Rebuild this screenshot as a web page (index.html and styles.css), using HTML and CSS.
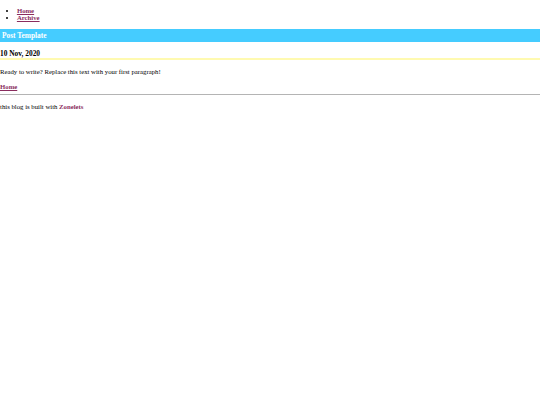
FILE: index.html
```html
<!DOCTYPE html>
<html lang="en">
<head>
<meta charset="utf-8">
<title>Post Template</title>
<link rel="stylesheet" href="styles.css">
</head>
<body>
<div class="header">
  <ul class="nav">
    <li><a href="#">Home</a></li>
    <li><a href="#">Archive</a></li>
  </ul>
</div>
<div class="content">
  <h1 class="post-title">Post Template</h1>
  <h2 class="post-date">10 Nov, 2020</h2>
  <p class="text">Ready to write? Replace this text with your first paragraph!</p>
  <p class="back"><a href="#">Home</a></p>
</div>
<div class="footer">
  <hr class="rule">
  <p class="credit">this blog is built with <a href="#">Zonelets</a></p>
</div>
</body>
</html>
```
FILE: styles.css
```css
html {
  background: #ffffff;
}
body {
  margin: 0;
  font-family: "Liberation Serif", "Times New Roman", serif;
  font-size: 6.75px;
  color: #000000;
}
a {
  color: #8a2d5e;
  font-weight: bold;
  text-decoration-thickness: 1px;
}
.credit a {
  text-underline-offset: 1.5px;
}
.nav {
  margin: 6.75px 0;
  padding-left: 16.875px;
}
.post-title {
  margin: 8.5px 0 0;
  padding: 2px;
  font-size: 7.4px;
  background: #45ccff;
  color: #ffffff;
}
.post-date {
  margin: 7px 0 0;
  padding-bottom: 0;
  font-size: 7.4px;
  border-bottom: 2px solid #fffab0;
}
.text {
  margin: 8px 0 0;
}
.back {
  margin: 8px 0 4px;
}
.rule {
  margin: 4px 0 0;
  border: 0;
  border-top: 1px solid #b4b4b4;
}
.credit {
  margin: 7.5px 0 0;
}
```
